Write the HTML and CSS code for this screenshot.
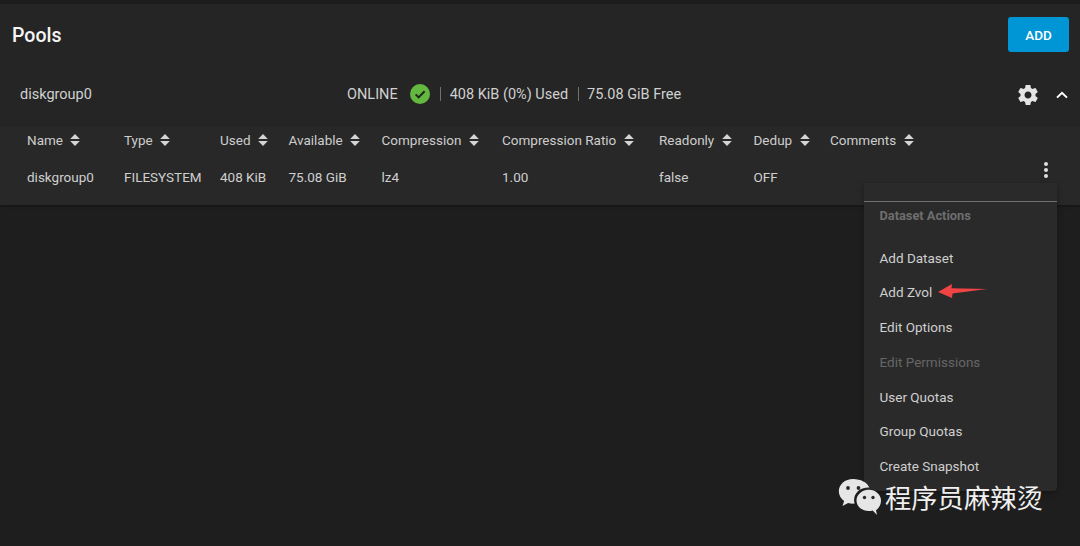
FILE: index.html
```html
<!DOCTYPE html>
<html lang="en">
<head>
    <meta charset="UTF-8">
    <meta name="viewport" content="width=device-width, initial-scale=1.0">
    <title>Pools</title>
    <link rel="stylesheet" href="styles.css">
</head>
<body>
    <svg class="defs" width="0" height="0">
        <symbol id="sort" viewBox="0 0 10 12">
            <path d="M5 0 9.800 5H0.200zM0.200 7H9.800L5 12z"/>
        </symbol>
    </svg>
    <div class="panel">
        <div class="page-header">
            <h1>Pools</h1>
            <button class="add-btn">ADD</button>
        </div>
        <div class="pool-row">
            <div class="pool-name">diskgroup0</div>
            <div class="pool-status">
                <span>ONLINE</span>
                <svg class="status-icon" viewBox="0 0 20 20">
                    <circle cx="10" cy="10" r="10" fill="#63b83f"/>
                    <path d="M5.600 10.400 8.600 13.400 14.600 7.200" fill="none" stroke="#20261c" stroke-width="2"/>
                </svg>
                <span class="sep"></span>
                <span>408 KiB (0%) Used</span>
                <span class="sep sep-last"></span>
                <span>75.08 GiB Free</span>
            </div>
            <div class="pool-actions">
                <svg class="gear" viewBox="0 0 24 24">
                    <path d="M19.43 12.98c.04-.32.07-.64.07-.98s-.03-.66-.07-.98l2.11-1.65c.19-.15.24-.42.12-.64l-2-3.46c-.12-.22-.39-.3-.61-.22l-2.49 1c-.52-.4-1.08-.73-1.69-.98l-.38-2.65C14.46 2.18 14.25 2 14 2h-4c-.25 0-.46.18-.49.42l-.38 2.65c-.61.25-1.17.59-1.69.98l-2.49-1c-.23-.09-.49 0-.61.22l-2 3.46c-.13.22-.07.49.12.64l2.11 1.65c-.04.32-.07.65-.07.98s.03.66.07.98l-2.11 1.65c-.19.15-.24.42-.12.64l2 3.46c.12.22.39.3.61.22l2.49-1c.52.4 1.08.73 1.69.98l.38 2.65c.03.24.24.42.49.42h4c.25 0 .46-.18.49-.42l.38-2.65c.61-.25 1.17-.59 1.69-.98l2.49 1c.23.09.49 0 .61-.22l2-3.46c.12-.22.07-.49-.12-.64l-2.11-1.65zM12 15.500c-1.930 0-3.500-1.570-3.500-3.500s1.570-3.500 3.500-3.500 3.500 1.570 3.500 3.500-1.570 3.500-3.500 3.500z"/>
                </svg>
                <svg class="chevron" viewBox="0 0 12 8">
                    <path d="M1 6.600 6 1.800 11 6.600" fill="none" stroke="#fff" stroke-width="2"/>
                </svg>
            </div>
        </div>
        <div class="dataset-table">
            <div class="table-row table-head">
                <div>Name <svg class="sort"><use href="#sort"/></svg></div>
                <div>Type <svg class="sort"><use href="#sort"/></svg></div>
                <div>Used <svg class="sort"><use href="#sort"/></svg></div>
                <div>Available <svg class="sort"><use href="#sort"/></svg></div>
                <div>Compression <svg class="sort"><use href="#sort"/></svg></div>
                <div>Compression Ratio <svg class="sort"><use href="#sort"/></svg></div>
                <div>Readonly <svg class="sort"><use href="#sort"/></svg></div>
                <div>Dedup <svg class="sort"><use href="#sort"/></svg></div>
                <div>Comments <svg class="sort"><use href="#sort"/></svg></div>
            </div>
            <div class="table-row table-body">
                <div>diskgroup0</div>
                <div>FILESYSTEM</div>
                <div>408 KiB</div>
                <div>75.08 GiB</div>
                <div>lz4</div>
                <div>1.00</div>
                <div>false</div>
                <div>OFF</div>
                <div class="more-cell">
                    <span class="more-dots"><i></i><i></i><i></i></span>
                </div>
            </div>
        </div>
    </div>

    <div class="menu">
        <div class="menu-title">Dataset Actions</div>
        <div class="menu-item">Add Dataset</div>
        <div class="menu-item">Add Zvol</div>
        <div class="menu-item">Edit Options</div>
        <div class="menu-item disabled">Edit Permissions</div>
        <div class="menu-item">User Quotas</div>
        <div class="menu-item">Group Quotas</div>
        <div class="menu-item">Create Snapshot</div>
    </div>

    <svg class="arrow" viewBox="0 0 50 14">
        <path d="M0 8 14 0 13.500 4.300 49 5 14.500 9.500 14 14z" fill="#f04444"/>
    </svg>

    <div class="watermark">
        <svg class="wechat" viewBox="0 0 44 38">
            <path d="M15 1C7 1 .8 6.500.8 13.300c0 3.900 2.100 7.300 5.300 9.600L4.500 28l5.600-3c1.500.5 3.200.7 4.900.7.600 0 1.100 0 1.700-.1-.4-1.200-.6-2.400-.6-3.700 0-6.900 6.300-12.400 14.100-12.400h1.100C29.300 4.500 22.800 1 15 1z" fill="#e6e6e6"/>
            <circle cx="10" cy="10" r="1.900" fill="#2a2a2a"/>
            <circle cx="20.500" cy="10" r="1.900" fill="#2a2a2a"/>
            <path d="M43 22.400C43 16.600 37.500 11.800 30.800 11.800s-12.300 4.800-12.300 10.600 5.500 10.600 12.300 10.600c1.400 0 2.700-.2 3.900-.6L39 37l-1-4.800c3-2 5-5.600 5-9.800z" fill="#e6e6e6"/>
            <circle cx="26.500" cy="19.500" r="1.700" fill="#2a2a2a"/>
            <circle cx="35" cy="19.500" r="1.700" fill="#2a2a2a"/>
        </svg>
        <span>程序员麻辣烫</span>
    </div>
</body>
</html>
```

FILE: styles.css
```css
* {
    box-sizing: border-box;
}
body {
    font-family: Roboto, 'Liberation Sans', sans-serif;
    font-size: 13.500px;
    background-color: #1e1e1e;
    color: #d0d0d0;
    margin: 0;
    height: 546px;
    padding-top: 4px;
    overflow: hidden;
    position: relative;
}
.defs {
    position: absolute;
}
.panel {
    background-color: #252525;
    box-shadow: 0 1px 3px rgba(0, 0, 0, 0.4);
}
.page-header {
    display: flex;
    justify-content: space-between;
    align-items: center;
    height: 61px;
    padding: 0 11px 0 12px;
}
h1 {
    margin: 1px 0 0;
    font-size: 19.500px;
    font-weight: 500;
    color: #f5f5f5;
}
.add-btn {
    width: 61px;
    height: 35px;
    border: none;
    border-radius: 3px;
    background-color: #0095d5;
    color: #ffffff;
    font-family: inherit;
    font-size: 13.500px;
    font-weight: 500;
}
.pool-row {
    display: flex;
    align-items: center;
    height: 62px;
    padding: 0 12px 4px 20px;
    font-size: 14.500px;
}
.pool-name {
    width: 327px;
}
.pool-status {
    display: flex;
    align-items: center;
    flex: 1;
    white-space: nowrap;
}
.status-icon {
    width: 20px;
    height: 20px;
    margin-left: 12px;
}
.sep {
    width: 1px;
    height: 14px;
    margin: 0 9px 0 10px;
    background-color: #707070;
}
.sep-last {
    margin-right: 8px;
}
.pool-actions {
    display: flex;
    align-items: center;
    gap: 16px;
    padding-top: 1px;
}
.gear {
    width: 24px;
    height: 24px;
    fill: #e4e4e4;
}
.chevron {
    width: 12px;
    height: 8px;
}
.dataset-table {
    background-color: #282828;
    height: 78px;
}
.table-row {
    display: grid;
    grid-template-columns: 97px 96px 68.5px 93px 120.5px 157px 94.5px 76.5px 1fr;
    align-items: center;
    padding-left: 27px;
    white-space: nowrap;
}
.table-head {
    height: 27px;
    padding-bottom: 2px;
    color: #cdcdcd;
}
.table-body {
    height: 45px;
    color: #cfcfcf;
}
.sort {
    width: 10px;
    height: 12px;
    margin-left: 4px;
    fill: #d4d4d4;
    vertical-align: -1.500px;
}
.more-cell {
    display: flex;
    justify-content: flex-end;
    padding-right: 32px;
}
.more-dots {
    display: flex;
    flex-direction: column;
    gap: 2px;
    margin-top: -13px;
}
.more-dots i {
    display: block;
    width: 4px;
    height: 4px;
    border-radius: 50%;
    background-color: #e0e0e0;
}
.menu {
    position: absolute;
    left: 864px;
    top: 183px;
    width: 193px;
    height: 308px;
    padding-top: 18px;
    background-color: #2a2a2a;
    border-radius: 0 0 4px 4px;
    box-shadow: 0 2px 6px rgba(0, 0, 0, 0.3);
}
.menu-title {
    height: 28px;
    margin-bottom: 11.500px;
    padding: 6px 15.500px 0;
    border-top: 1px solid #6f6f6f;
    color: #6e6e6e;
    font-size: 12.800px;
    font-weight: 700;
}
.menu-item {
    height: 34.800px;
    line-height: 34.800px;
    padding: 0 15.500px;
    color: #cfcfcf;
}
.menu-item.disabled {
    color: #666666;
}
.arrow {
    position: absolute;
    left: 938px;
    top: 284px;
    width: 50px;
    height: 14px;
}
.watermark {
    position: absolute;
    left: 838px;
    top: 477px;
    display: flex;
    align-items: center;
    gap: 3px;
    color: #f0f0f0;
    font-family: 'Noto Sans CJK SC', sans-serif;
    font-size: 26.300px;
    line-height: 40px;
}
.wechat {
    width: 44px;
    height: 38px;
}
```
